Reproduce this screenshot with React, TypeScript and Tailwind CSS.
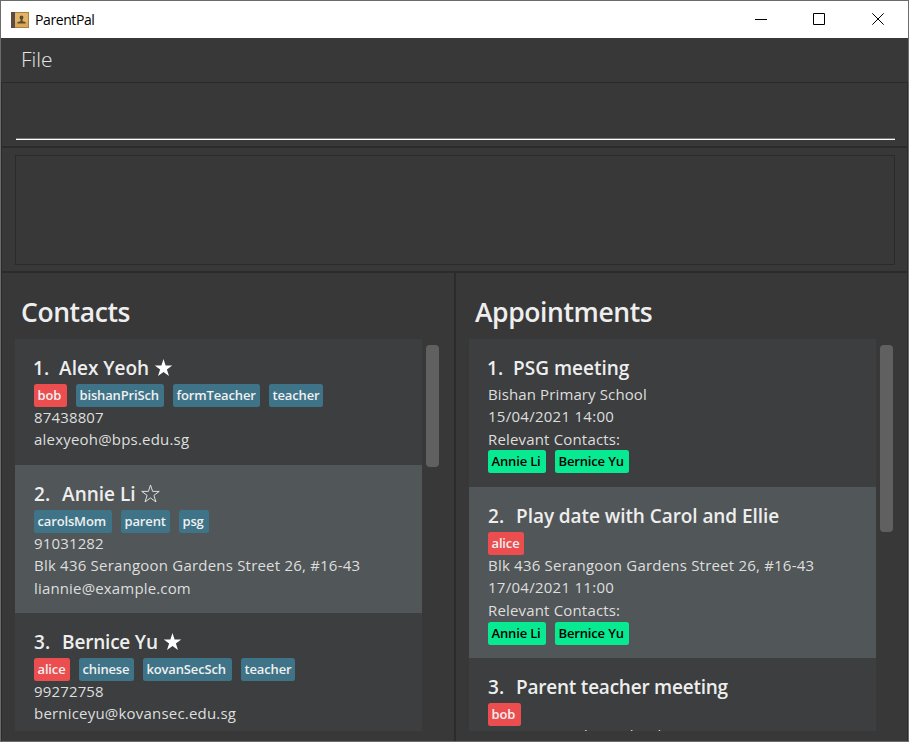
import React from 'react';

type Tag = { label: string; width: string; tone: 'blue' | 'red' | 'green' };
type Line = { text: string; track: string };
type Entry = {
  n: number;
  name: string;
  nameClass: string;
  star?: 'full' | 'empty';
  tags?: Tag[];
  lines: Line[];
  related?: Tag[];
  height: string;
};

const tones = {
  blue: 'bg-[#3e7388] text-[#f0f0f0]',
  red: 'bg-[#ec4e50] text-[#f0f0f0]',
  green: 'bg-[#08ea92] text-black',
};

const contacts: Entry[] = [
  {
    n: 1, name: 'Alex Yeoh', nameClass: 'ml-[10px]', star: 'full', height: 'h-[126px]',
    tags: [
      { label: 'bob', width: 'w-[33px]', tone: 'red' },
      { label: 'bishanPriSch', width: 'w-[88px]', tone: 'blue' },
      { label: 'formTeacher', width: 'w-[87px]', tone: 'blue' },
      { label: 'teacher', width: 'w-[54px]', tone: 'blue' },
    ],
    lines: [
      { text: '87438807', track: 'tracking-[0.15px]' },
      { text: 'alexyeoh@bps.edu.sg', track: 'tracking-[0.2px]' },
    ],
  },
  {
    n: 2, name: 'Annie Li', nameClass: 'ml-3', star: 'empty', height: 'h-[148px]',
    tags: [
      { label: 'carolsMom', width: 'w-[78px]', tone: 'blue' },
      { label: 'parent', width: 'w-[49px]', tone: 'blue' },
      { label: 'psg', width: 'w-[30px]', tone: 'blue' },
    ],
    lines: [
      { text: '91031282', track: 'tracking-[0.15px]' },
      { text: 'Blk 436 Serangoon Gardens Street 26, #16-43', track: 'tracking-[0.21px]' },
      { text: 'liannie@example.com', track: 'tracking-[0.16px]' },
    ],
  },
  {
    n: 3, name: 'Bernice Yu', nameClass: 'ml-3 tracking-[-0.2px]', star: 'full', height: 'h-[126px]',
    tags: [
      { label: 'alice', width: 'w-[36px]', tone: 'red' },
      { label: 'chinese', width: 'w-[55px]', tone: 'blue' },
      { label: 'kovanSecSch', width: 'w-[89px]', tone: 'blue' },
      { label: 'teacher', width: 'w-[54px]', tone: 'blue' },
    ],
    lines: [
      { text: '99272758', track: 'tracking-[0.15px]' },
      { text: 'berniceyu@kovansec.edu.sg', track: 'tracking-[0.2px]' },
    ],
  },
];

const guests: Tag[] = [
  { label: 'Annie Li', width: 'w-[58px]', tone: 'green' },
  { label: 'Bernice Yu', width: 'w-[74px]', tone: 'green' },
];

const appointments: Entry[] = [
  {
    n: 1, name: 'PSG meeting', nameClass: 'ml-[10px]', height: 'h-[148px]',
    lines: [
      { text: 'Bishan Primary School', track: 'tracking-[0.12px]' },
      { text: '15/04/2021 14:00', track: 'tracking-[0.27px]' },
      { text: 'Relevant Contacts:', track: 'tracking-[0.17px]' },
    ],
    related: guests,
  },
  {
    n: 2, name: 'Play date with Carol and Ellie', nameClass: 'ml-3 tracking-[-0.07px]', height: 'h-[171px]',
    tags: [{ label: 'alice', width: 'w-[36px]', tone: 'red' }],
    lines: [
      { text: 'Blk 436 Serangoon Gardens Street 26, #16-43', track: 'tracking-[0.21px]' },
      { text: '17/04/2021 11:00', track: 'tracking-[0.27px]' },
      { text: 'Relevant Contacts:', track: 'tracking-[0.17px]' },
    ],
    related: guests,
  },
  {
    n: 3, name: 'Parent teacher meeting', nameClass: 'ml-3 tracking-[-0.23px]', height: 'h-[148px]',
    tags: [{ label: 'bob', width: 'w-[33px]', tone: 'red' }],
    lines: [{ text: 'Kovan Secondary School', track: 'leading-[18px] tracking-[0.12px]' }],
  },
];

function Star({ kind }: { kind: 'full' | 'empty' }) {
  return (
    <svg className="mb-[3px] ml-[5px] h-[19px] w-[19px] shrink-0" viewBox="0 0 18 18">
      <path
        d="M9 1 11 7H17.3L12.2 10.8 14.2 17 9 13.2 3.8 17 5.8 10.8.7 7H7Z"
        fill={kind === 'full' ? '#fff' : 'none'}
        stroke={kind === 'full' ? 'none' : '#e6e6e6'}
        strokeWidth="0.9"
      />
    </svg>
  );
}

function Tags({ tags }: { tags: Tag[] }) {
  return (
    <div className="flex gap-[9px]">
      {tags.map((t) => (
        <span
          key={t.label}
          className={`flex h-[23px] items-center whitespace-nowrap rounded-[2.5px] pl-[3.5px] text-[13px] font-semibold leading-none tracking-[-0.15px] ${t.width} ${tones[t.tone]}`}
        >
          {t.label}
        </span>
      ))}
    </div>
  );
}

function Card({ entry, dark }: { entry: Entry; dark: boolean }) {
  return (
    <div className={`shrink-0 pl-[19px] pt-4 ${entry.height} ${dark ? 'bg-[#3c3e3f]' : 'bg-[#515658]'}`}>
      <div className="flex h-[29px] items-center whitespace-pre pb-0.5 text-[19px] font-semibold text-[#eeeeee]">
        <span className={entry.n === 1 ? '-ml-px' : 'ml-0'}>{entry.n}.</span>
        <span className={entry.nameClass}>{entry.name}</span>
        {entry.star && <Star kind={entry.star} />}
      </div>
      {entry.tags && <Tags tags={entry.tags} />}
      {entry.lines.map((l) => (
        <div key={l.text} className="h-[22.3px] text-[15px] leading-[20px] text-[#dedede]">
          <p className={`whitespace-nowrap ${l.track}`}>{l.text}</p>
        </div>
      ))}
      {entry.related && (
        <div className={entry.tags ? 'mt-0' : '-mt-px'}>
          <Tags tags={entry.related} />
        </div>
      )}
    </div>
  );
}

function Panel({ title, entries, thumb }: { title: string; entries: Entry[]; thumb: string }) {
  return (
    <section className="flex flex-col pb-[10px] pl-[13px] pt-[17px]">
      <h2 className="h-[49px] pl-1.5 text-[26.5px] font-semibold leading-[44px] tracking-[-0.4px] text-[#eeeeee]">{title}</h2>
      <div className="flex h-[392px]">
        <div className="flex w-[407px] flex-col overflow-hidden">
          {entries.map((e) => (
            <Card key={e.n} entry={e} dark={e.n % 2 === 1} />
          ))}
        </div>
        <div className="pl-1 pt-1.5">
          <div className={`w-[13px] rounded-[4px] bg-[#606060] ${thumb}`} />
        </div>
      </div>
    </section>
  );
}

export default function App() {
  return (
    <div className="h-[742px] w-[909px] overflow-hidden border border-[#6b6b6b] bg-[#383838] font-['Open_Sans','Noto_Sans',sans-serif]">
      <header className="flex h-[37px] items-center bg-white text-black">
        <svg className="ml-[10px] h-[18px] w-[18px]" viewBox="0 0 18 18">
          <rect x="0" y="1" width="18" height="16" fill="#a87f45" />
          <rect x="0" y="1" width="4" height="16" fill="#5b4b42" />
          <rect x="4" y="2" width="13" height="14" fill="#e2b468" />
          <rect x="4" y="11" width="13" height="5" fill="#d9a855" />
          <circle cx="10.5" cy="6.4" r="1.9" fill="#5c4a31" />
          <path d="M9.5 7h2v3.2l3 .8v1.6h-8V11l3-.8z" fill="#5c4a31" />
        </svg>
        <span className="ml-1.5 text-[14px] tracking-[-0.4px]">ParentPal</span>
        <svg className="ml-auto mr-[23px] h-[13px] w-[130px]" viewBox="0 0 130 13" fill="none" stroke="#000">
          <path d="M0 6.5h12M58.5.5h11v11h-11z" />
          <path d="m117.3.3 11.4 11.4M128.7.3 117.3 11.7" />
        </svg>
      </header>
      <nav className="flex h-11 items-center pl-5 text-[21px] font-light text-[#e6e6e6]">File</nav>
      <div className="flex h-[66px] flex-col justify-end border border-b-2 border-[#2b2b2b] pb-1.5 pl-[14px] pr-3">
        <div className="h-0.5 border-b border-t border-b-white border-t-[#777]" />
      </div>
      <div className="h-[125px] border-x border-b-2 border-[#2b2b2b] pb-1.5 pl-[13px] pr-3 pt-[7px]">
        <div className="h-[110px] border border-[#2b2b2b]" />
      </div>
      <main className="flex h-[468px] border-x border-[#2b2b2b]">
        <div className="w-[454px] border-r-2 border-[#2b2b2b]">
          <Panel title="Contacts" entries={contacts} thumb="h-[122px]" />
        </div>
        <Panel title="Appointments" entries={appointments} thumb="h-[187px]" />
      </main>
    </div>
  );
}
